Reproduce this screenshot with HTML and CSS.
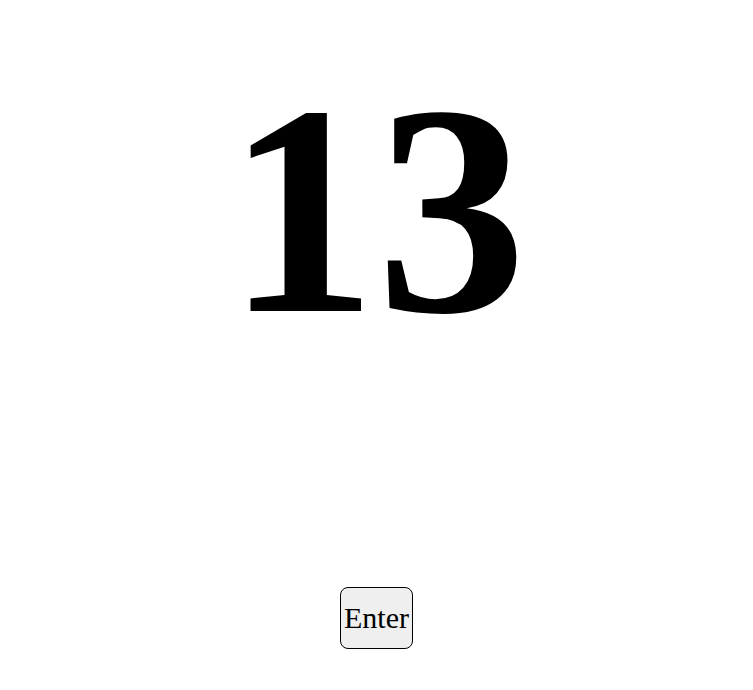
FILE: index.html
```html
<!DOCTYPE html>
<html>
<head>
<meta charset="utf-8">
<link rel="stylesheet" href="styles.css">
</head>
<body>
<main class="page">
  <div class="count">13</div>
  <button class="enter">Enter</button>
</main>
</body>
</html>
```
FILE: styles.css
```css
html, body {
  margin: 0;
  padding: 0;
  background: #fff;
}
.page {
  display: flex;
  flex-direction: column;
  align-items: center;
  font-family: "Liberation Serif", "Times New Roman", serif;
}
.count {
  font-size: 300px;
  font-weight: bold;
  line-height: 1;
  margin-top: 60px;
  color: #000;
}
.enter {
  margin-top: 227px;
  font-family: "Liberation Serif", "Times New Roman", serif;
  font-size: 30px;
  padding: 13px 3px;
  background: #efefef;
  border: 1px solid #000;
  border-radius: 8px;
  color: #000;
}
```
